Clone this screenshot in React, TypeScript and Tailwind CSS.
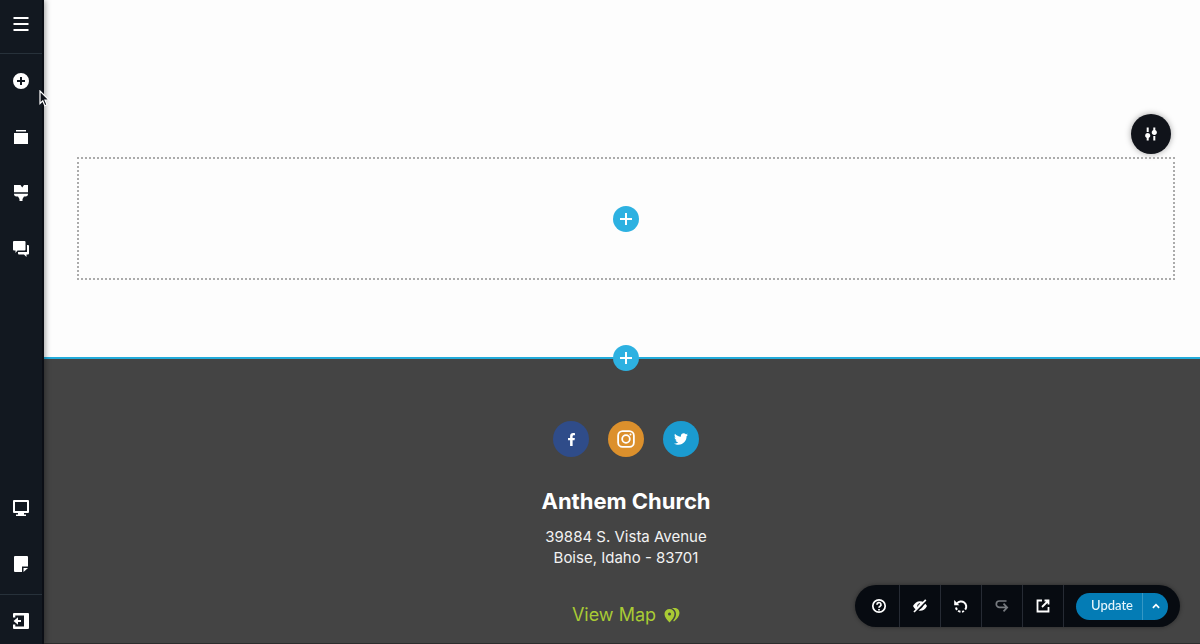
import type { ReactNode } from 'react';
import { FaFacebookF, FaTwitter } from 'react-icons/fa';

type Item = { label: string; icon: ReactNode };

const svg = (children: ReactNode, size = 16) => (
  <svg width={size} height={size} viewBox="0 0 16 16" fill="currentColor" aria-hidden="true">
    {children}
  </svg>
);

const MenuIcon = () => svg(<path d="M.5 1h15v2H.5zM.5 7h15v2H.5zM.5 13h15v2H.5z" />);

const topItems: Item[] = [
  {
    label: 'Add elements',
    icon: svg(<path fillRule="evenodd" d="M8 0a8 8 0 1 1 0 16A8 8 0 0 1 8 0zM7 4v3H4v2h3v3h2V9h3V7H9V4z" />),
  },
  {
    label: 'Sections',
    icon: svg(<path d="M3 1h10v1.400H3zM1 4h14v11H1z" />),
  },
  {
    label: 'Styles',
    icon: svg(<path d="M1 0h6.500l1.700 2.500L11 0h4v7.200H1zM1 8.800h14q0 2.700-2.500 2.700H11L9.500 14v2h-3v-2L5 11.500H3.500Q1 11.500 1 8.800z" />),
  },
  {
    label: 'Comments',
    icon: svg(
      <path d="M1 0h10.500q1 0 1 1v7.500q0 1-1 1H4.500L2.500 12V9.500H1q-1 0-1-1V1q0-1 1-1zM14 4h1q1 0 1 1v7.500q0 1-1 1h-1.500V16L11 13.500H6q-1 0-1-1V11h9z" />
    ),
  },
];

const bottomItems: Item[] = [
  {
    label: 'Device preview',
    icon: svg(<path fillRule="evenodd" d="M1 0h14q1 0 1 1v11q0 1-1 1h-4v1.500h2V16H3v-1.500h2V13H1q-1 0-1-1V1q0-1 1-1zM2 2v9h12V2z" />),
  },
  {
    label: 'Notes',
    icon: svg(<path d="M2 0h12q1 0 1 1v9.500H9V16H2q-1 0-1-1V1q0-1 1-1zM10.500 12H15l-4.500 4z" />),
  },
];

const ExitIcon = () =>
  svg(
    <>
      <path fillRule="evenodd" d="M1 0h14q1 0 1 1v14q0 1-1 1H1q-1 0-1-1v-3.500h2.300v2H11v-11H2.300v2H0V1q0-1 1-1z" />
      <path d="M.5 8l4.500-3.800V7h3v2H5v2.800z" />
    </>
  );

const SlidersIcon = () =>
  svg(<path d="M3.700 1.500h2V6h-2zM4.700 7a2.600 2.600 0 0 1 1 5v2.500h-2V12a2.600 2.600 0 0 1 1-5zM10.300 1.500h2V4a2.600 2.600 0 1 1-2 0zM10.300 10h2v4.500h-2z" />);

const PlusIcon = () => svg(<path d="M7 2h2v5h5v2H9v5H7V9H2V7h5z" />);

const InstagramIcon = () =>
  svg(
    <g fill="none" stroke="currentColor" strokeWidth="1.600">
      <rect x="1" y="1" width="14" height="14" rx="4" />
      <circle cx="8" cy="8" r="3.400" />
      <circle cx="12" cy="4" r=".9" fill="currentColor" stroke="none" />
    </g>,
    18
  );

const tools: Item[] = [
  {
    label: 'Help',
    icon: svg(
      <g fill="none" stroke="currentColor" strokeWidth="1.700">
        <circle cx="8" cy="8" r="6.200" />
        <path d="M6 6.700a2 2 0 1 1 3.100 1.500Q8 8.800 8 9.800M8 10.900v1.500" />
      </g>
    ),
  },
  {
    label: 'Hide preview',
    icon: svg(
      <>
        <path d="M1 8c1.800-3.300 4-4.800 7-4.800S13.200 4.700 15 8c-1.800 3.300-4 4.800-7 4.800S2.800 11.300 1 8z" />
        <path d="M5.700 8.500a2.500 2.500 0 0 1 2.300-2.900M10.300 8a2.500 2.500 0 0 1-2.200 2.400" stroke="#070b11" strokeWidth="1" fill="none" />
        <path d="M3 15L15 2.500" stroke="#070b11" strokeWidth="2" />
        <path d="M2 14L13.800 1.800" stroke="currentColor" strokeWidth="1.700" />
      </>
    ),
  },
  {
    label: 'Undo',
    icon: svg(
      <g fill="none" stroke="currentColor" strokeWidth="2">
        <path d="M4 5.500a5 5 0 1 1 8.200 6.200" />
        <path d="M3 9.500a5.300 5.300 0 0 0 8 3.500" strokeDasharray="2.500 1.500" />
        <path d="M1.200 2v5.200h5.200z" fill="currentColor" stroke="none" />
      </g>
    ),
  },
  {
    label: 'Redo',
    icon: svg(
      <path d="M12.500 3H5.500a3.200 3.200 0 0 0 0 6.400h7.500M9.500 5.700l3.700 3.700-3.700 3.900" fill="none" stroke="#777b80" strokeWidth="1.700" />
    ),
  },
  {
    label: 'Open in new tab',
    icon: svg(
      <path d="M7 2.500H2.500v11h11V9M9.500 2.500h4v4M13.500 2.500L7 9" fill="none" stroke="currentColor" strokeWidth="1.800" />
    ),
  },
];

const socials = [
  { label: 'Facebook', color: 'bg-[#2f4c89]', icon: <FaFacebookF size={13} /> },
  { label: 'Instagram', color: 'bg-[#dc902c]', icon: <InstagramIcon /> },
  { label: 'Twitter', color: 'bg-[#1b9bd0]', icon: <FaTwitter size={14} /> },
];

function SideButton({ label, icon }: Item) {
  return (
    <button type="button" aria-label={label} className="flex h-14 w-full items-center justify-center pb-0.5">
      {icon}
    </button>
  );
}

function Sidebar() {
  return (
    <aside className="sticky top-0 z-20 flex h-screen w-11 shrink-0 flex-col border-r-2 border-[#0b0e15] bg-[#121820] text-white shadow-[1px_0_6px_rgba(0,0,0,0.4)]">
      <button type="button" aria-label="Menu" className="flex h-[54px] items-center justify-center border-b border-[#27313a] pb-[5px]">
        <MenuIcon />
      </button>
      {topItems.map((item) => (
        <SideButton key={item.label} {...item} />
      ))}
      <div className="mt-auto pb-px">
        {bottomItems.map((item) => (
          <SideButton key={item.label} {...item} />
        ))}
      </div>
      <button type="button" aria-label="Exit editor" className="flex h-[50px] items-center justify-center border-t border-[#27313a] pt-[3px]">
        <ExitIcon />
      </button>
    </aside>
  );
}

function AddButton({ label }: { label: string }) {
  return (
    <button type="button" aria-label={label} className="flex size-[26px] items-center justify-center rounded-full bg-[#2db1e1] text-white">
      <PlusIcon />
    </button>
  );
}

function Toolbar() {
  return (
    <div className="fixed right-5 bottom-[17px] z-20 flex h-[42px] items-center rounded-full bg-[#070b11] pl-1 text-white shadow-[0_0_4px_rgba(0,0,0,0.4)]">
      {tools.map((tool) => (
        <button key={tool.label} type="button" aria-label={tool.label} className="flex h-full w-[41px] items-center justify-center border-r border-[#262b34]">
          {tool.icon}
        </button>
      ))}
      <div className="mx-3 flex h-[27px] overflow-hidden rounded-full bg-[#047cb5]">
        <button type="button" className="w-[67px] border-r border-[#3597c4] pb-0.5 pl-1.5 font-[Lato,sans-serif] text-[13px] leading-6 font-medium text-[#e6f6fc]">
          Update
        </button>
        <button type="button" aria-label="Update options" className="flex w-[25px] items-center justify-center">
          {svg(<path d="M3 11l5-5 5 5" fill="none" stroke="currentColor" strokeWidth="2.800" />, 10)}
        </button>
      </div>
    </div>
  );
}

export default function App() {
  return (
    <div className="flex min-h-screen bg-[#fdfdfd] font-[Inter,sans-serif]">
      <Sidebar />
      <main className="flex flex-1 flex-col">
        <section className="flex flex-col pt-[114px] pr-[25px] pb-[77px] pl-[33px]">
          <button
            type="button"
            aria-label="Section settings"
            className="mr-1 mb-[3px] flex size-10 items-center justify-center self-end rounded-full bg-[#10131a] text-white shadow-[0_0_6px_rgba(0,0,0,0.35)]"
          >
            <SlidersIcon />
          </button>
          <div className="flex h-[123px] items-center justify-center border-2 border-dotted border-[#ababab]">
            <AddButton label="Add element" />
          </div>
        </section>

        <footer className="relative flex flex-1 flex-col items-center border-t-2 border-b border-t-[#22abda] border-b-[#2d2d2d] bg-[#444444] pt-[62px] pl-2 text-center text-white">
          <div className="absolute inset-x-0 -top-[14px] flex justify-center pl-2">
            <AddButton label="Add section" />
          </div>
          <div className="flex gap-[19px]">
            {socials.map(({ label, color, icon }) => (
              <a key={label} href="#" aria-label={label} className={`flex size-9 items-center justify-center rounded-full ${color}`}>
                {icon}
              </a>
            ))}
          </div>
          <h2 className="mt-7 text-[22px] leading-8 font-bold">Anthem Church</h2>
          <address className="mt-[9px] text-[15px] leading-[21px] text-[#f2f2f2] not-italic">
            39884 S. Vista Avenue
            <br />
            Boise, Idaho - 83701
          </address>
          <a href="#" className="mt-[31px] flex items-center gap-2 text-lg leading-8 text-[#a9cb34]">
            View Map
            {svg(
              <>
                <path fillRule="evenodd" d="M5.500 2a5 5 0 0 1 5 5c0 3-2.500 6-5 8.500C3 13 .5 10 .5 7a5 5 0 0 1 5-5zM5.500 5.500a1.500 1.500 0 1 0 0 3 1.500 1.500 0 0 0 0-3z" />
                <path d="M8 1.300C12 0 15.500 2 15.500 6c0 3-2.500 6-5.500 8.500l-.8-.8C11 11.500 12 9.500 12 7c0-2.500-1.300-4.500-4-5.700z" />
              </>
            )}
          </a>
        </footer>
      </main>
      <Toolbar />

      {/* pointer */}
      <svg className="pointer-events-none absolute top-[90px] left-[39px] z-30" width="11" height="17" viewBox="0 0 11 17" aria-hidden="true">
        <path d="M1 1v12.500l2.800-2.600 2 4.800 2.200-1-2-4.500h4z" fill="#10131a" stroke="#fff" strokeWidth="1.200" />
      </svg>
    </div>
  );
}
